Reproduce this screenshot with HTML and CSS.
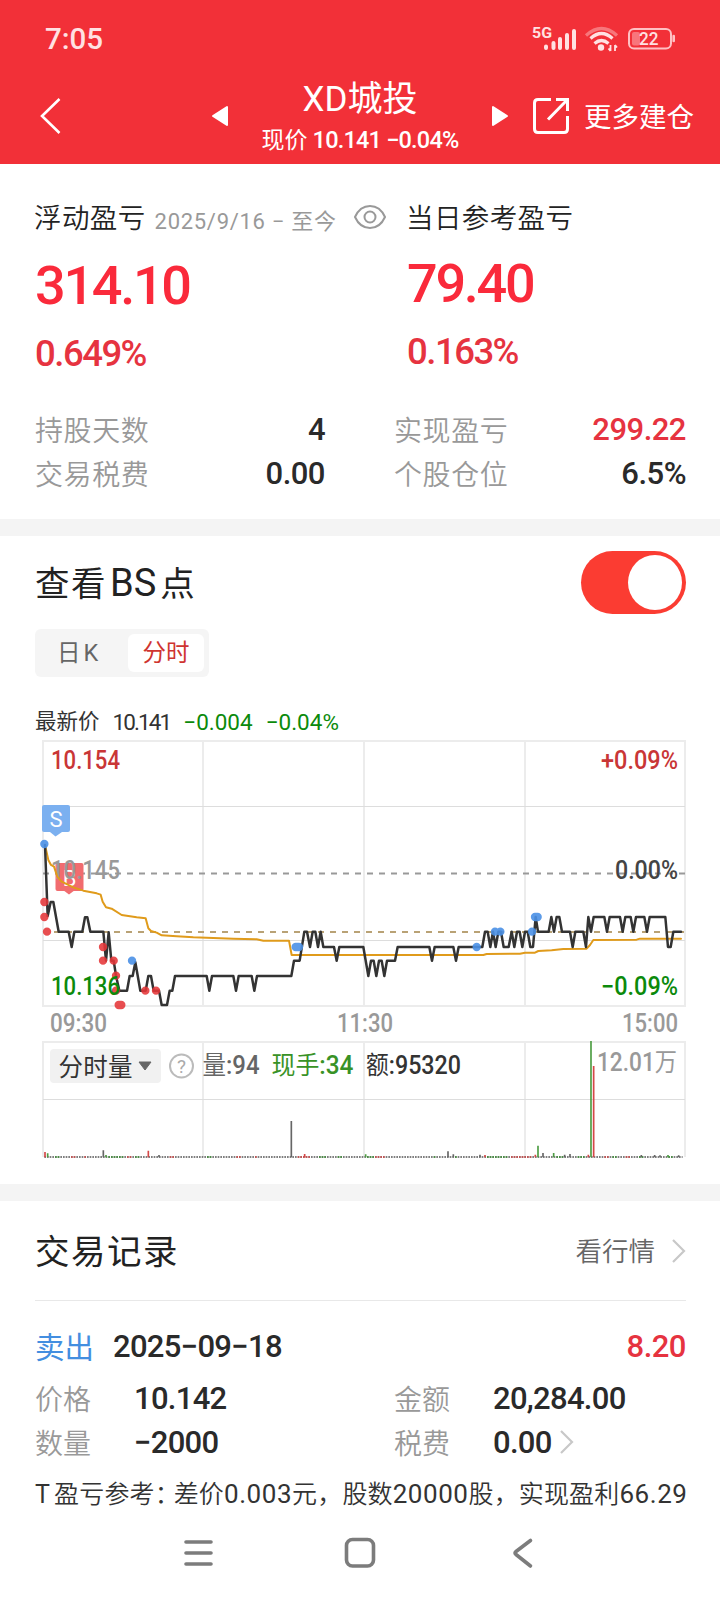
FILE: index.html
```html
<!DOCTYPE html>
<html lang="zh-CN">
<head>
<meta charset="utf-8">
<title>XD城投</title>
<link rel="stylesheet" href="styles.css">
</head>
<body>
<header class="top">
  <div class="status">
    <span class="clock">7:05</span>
    <svg class="status-icons" width="146" height="30" viewBox="530 24 146 30">
      <text x="532" y="37.500" class="net" textLength="20" lengthAdjust="spacingAndGlyphs">5G</text>
      <g stroke="#ffe1e2" stroke-width="4" stroke-linecap="round"><path d="M546 46.500v1.500M553.500 43v5M560 39v9M567 35v13M574 31v17"/></g>
      <g fill="none" stroke="#ffe1e2" stroke-width="3.200">
        <path d="M586 35.500q15.500-14 31 0" opacity=".4"/>
        <path d="M590.500 38.500q11-10 22 0"/>
        <path d="M594.500 43.500q7-6 14 0"/>
      </g>
      <circle cx="601" cy="47.500" r="3.200" fill="#ffe1e2"/>
      <path d="M610.500 45v6m-2-2.500 2 2.500M615 51v-6m2 2.500-2-2.500" stroke="#ffe1e2" stroke-width="1.800" fill="none"/>
      <rect x="629" y="29" width="42" height="19.500" rx="5" fill="none" stroke="#ffc0c3" stroke-width="2"/>
      <rect x="632" y="32" width="8" height="13.500" rx="2" fill="#f8757b"/>
      <path d="M673.700 36v5" stroke="#ffc0c3" stroke-width="2.600" stroke-linecap="round"/>
      <text x="639" y="45" class="batt" textLength="19.500" lengthAdjust="spacingAndGlyphs">22</text>
    </svg>
  </div>
  <div class="titlebar">
    <svg class="back" width="24" height="40" viewBox="0 0 24 40"><path d="M20.500 3 3 20l17.500 17" fill="none" stroke="#fff" stroke-width="2.600"/></svg>
    <svg class="prev" width="18" height="22" viewBox="0 0 18 22"><path d="M16 2v18L2 11z" fill="#fff" stroke="#fff" stroke-width="2" stroke-linejoin="round"/></svg>
    <div class="stock">
      <div class="stock-name">XD城投</div>
      <div class="stock-price"><span class="cn">现价</span> <span class="q">10.141 −0.04%</span></div>
    </div>
    <svg class="next" width="18" height="22" viewBox="0 0 18 22"><path d="M2 2v18l14-9z" fill="#fff" stroke="#fff" stroke-width="2" stroke-linejoin="round"/></svg>
    <svg class="share" width="38" height="38" viewBox="0 0 38 38" fill="none" stroke="#fff" stroke-width="3"><path d="M19 2.500H6Q2.500 2.500 2.500 6v26q0 3.500 3.500 3.500h26q3.500 0 3.500-3.500V19"/><path d="M24 2.500h11.500V14M35.500 2.500 16 22.500"/></svg>
    <span class="more">更多建仓</span>
  </div>
</header>

<section class="summary">
  <div class="pl">
    <div class="pl-col first">
      <div class="pl-head"><span class="label">浮动盈亏</span><span class="range">2025/9/16 − 至今</span>
        <svg class="eye" width="34" height="26" viewBox="0 0 34 26" fill="none" stroke="#999" stroke-width="2"><path d="M2 13Q7 2 17 2t15 11q-5 11-15 11T2 13z"/><circle cx="17" cy="13" r="5.500"/></svg></div>
      <div class="big">314.10</div>
      <div class="pct">0.649%</div>
    </div>
    <div class="pl-col second">
      <div class="pl-head"><span class="label">当日参考盈亏</span></div>
      <div class="big">79.40</div>
      <div class="pct">0.163%</div>
    </div>
  </div>
  <div class="facts">
    <div class="fact"><span class="k">持股天数</span><span class="v">4</span></div>
    <div class="fact"><span class="k">实现盈亏</span><span class="v red">299.22</span></div>
    <div class="fact"><span class="k">交易税费</span><span class="v">0.00</span></div>
    <div class="fact"><span class="k">个股仓位</span><span class="v">6.5%</span></div>
  </div>
</section>

<section class="bs">
  <div class="bs-head"><h2>查看<span class="lat">BS</span>点</h2><div class="toggle"><i></i></div></div>
  <div class="tabs"><span class="tab">日<span class="lat">K</span></span><span class="tab on">分时</span></div>
  <div class="quote"><span class="name">最新价</span><span class="q1">10.141</span><span class="q2">−0.004</span><span class="q3">−0.04%</span></div>
  <svg class="chart" width="720" height="429" viewBox="0 735 720 429">
    <g fill="none" stroke="#ececec" stroke-width="2">
      <path d="M43 741H685V1006H43zM203 741v265M364 741v265M525 741v265"/>
      <path d="M43 1157V1042H685v115M203 1042v115M364 1042v115M525 1042v115"/>
    </g>
    <path d="M43 806.500H685M43 940.500H685M43 1099.500H685" stroke="#ddd" fill="none"/>
    <path d="M43 873.500H685" stroke="#999" stroke-width="2" stroke-dasharray="6 6"/>
    <path d="M54 932H685" stroke="#b9a275" stroke-width="2" stroke-dasharray="6 6"/>
    <g class="din">
      <text x="51" y="769" fill="#c93636" textLength="69" lengthAdjust="spacingAndGlyphs">10.154</text>
      <text x="678" y="769" fill="#c93636" text-anchor="end" textLength="77" lengthAdjust="spacingAndGlyphs">+0.09%</text>
      <text x="678" y="879" fill="#444" text-anchor="end" textLength="63" lengthAdjust="spacingAndGlyphs">0.00%</text>
      <text x="678" y="995" fill="#0b8a0b" text-anchor="end" textLength="77" lengthAdjust="spacingAndGlyphs">−0.09%</text>
      <text x="50" y="1032" fill="#999" textLength="57" lengthAdjust="spacingAndGlyphs">09:30</text>
      <text x="337" y="1032" fill="#999" textLength="56" lengthAdjust="spacingAndGlyphs">11:30</text>
      <text x="622" y="1032" fill="#999" textLength="56" lengthAdjust="spacingAndGlyphs">15:00</text>
    </g>
    <g fill="#7bb0f0"><rect x="42" y="805" width="28" height="27" rx="2"/><path d="M50 832h12l-6.500 4.500z"/></g>
    <g fill="#f16c6f"><rect x="55.500" y="863" width="28" height="28" rx="2"/><path d="M63 890h12l-6 4.500z"/></g>
    <text x="56" y="827" class="mark">S</text>
    <text x="69.500" y="885.500" class="mark">B</text>
    <text x="51" y="879" class="din" fill="#999" textLength="69" lengthAdjust="spacingAndGlyphs">10.145</text>
    <g transform="translate(30 730) scale(.33333)" fill="none" stroke-linejoin="round" stroke-linecap="round">
      <path stroke="#e09b1b" stroke-width="6" d="M45 345L55 390 63 405 72 410 82 440 95 455 130 472 160 482 200 490 212 494 218 515 228 532 245 536 275 555 320 562 347 565 355 595 363 603 380 608 395 616 440 619 490 622 610 626 680 628 700 632 777 632 785 675 1360 675 1370 672 1470 671 1485 668 1515 668 1525 663 1565 661 1600 657 1670 656 1680 645 1690 630 1820 629 1830 626 1953 626"/>
      <path stroke="#333" stroke-width="7.500" d="M45 345L53 558 62 516 70 516 86 605 116 605 125 651 133 605 157 605 165 562 172 562 181 605 220 605 228 692 236 607 244 692 251 692 258 737 268 782 291 782 299 738 308 738 316 697 331 782 347 782 355 738 363 738 371 782 387 782 395 825 411 825 419 782 427 782 435 738 530 738 538 782 546 738 610 738 618 782 626 738 665 738 673 782 681 738 784 738 792 692 809 692 823 605 831 605 840 651 848 605 856 605 864 651 872 605 880 651 912 651 920 692 928 651 1000 651 1015 738 1023 692 1031 692 1039 738 1047 692 1055 692 1063 738 1071 692 1095 692 1103 651 1198 651 1206 692 1214 651 1270 651 1278 692 1286 651 1357 651 1365 605 1373 605 1381 651 1389 605 1397 651 1405 605 1413 605 1421 651 1436 651 1445 605 1453 651 1461 605 1469 605 1477 651 1485 605 1493 605 1501 651 1509 651 1517 561 1524 605 1556 605 1564 561 1572 605 1580 561 1588 561 1596 605 1620 605 1628 651 1636 605 1660 605 1668 651 1675 561 1683 605 1691 561 1723 561 1731 605 1739 561 1770 561 1778 605 1786 561 1802 561 1810 605 1818 561 1843 561 1851 605 1859 561 1906 561 1914 651 1922 651 1930 605 1953 605"/>
      <path stroke="#e53638" stroke-opacity=".88" stroke-width="25" d="M43 516h.1M43 561h.1M51 605h.1M219 651h.1M219 692h.1M251 692h.1M258 737h.1M258 782h.1M266 825h8M346 782h.1M378 782h.1"/>
      <path stroke="#4a90e6" stroke-opacity=".9" stroke-width="25" d="M43 342h.1M306 692h.1M797 651h10M1340 651h.1M1395 605h.1M1411 605h.1M1506 605h.1M1515 561h8"/>
    </g>
    <text x="51" y="995" class="din" fill="#0b8a0b" textLength="69" lengthAdjust="spacingAndGlyphs">10.136</text>
    <rect x="50" y="1049" width="111" height="34" rx="4" fill="#f1f1f1"/>
    <text x="58.500" y="1075.500" class="cnt" fill="#333" textLength="74">分时量</text>
    <path d="M139 1062h12l-6 8z" fill="#666" stroke="#666" stroke-linejoin="round"/>
    <circle cx="181.500" cy="1066" r="11.500" fill="none" stroke="#bbb" stroke-width="2"/>
    <text x="181.500" y="1073" class="help">?</text>
    <text x="202.500" y="1074" class="cnt" fill="#666" textLength="57" lengthAdjust="spacingAndGlyphs">量<tspan class="din">:94</tspan></text>
    <text x="271.500" y="1074" class="cnt" fill="#389226" textLength="82" lengthAdjust="spacingAndGlyphs">现手<tspan class="din">:34</tspan></text>
    <text x="366" y="1074" class="cnt" fill="#333" textLength="95" lengthAdjust="spacingAndGlyphs">额<tspan class="din">:95320</tspan></text>
    <text x="597" y="1070.500" class="cnt" fill="#999" textLength="80" lengthAdjust="spacingAndGlyphs"><tspan class="din">12.01</tspan>万</text>
    <g transform="translate(30 1000) scale(.33333)" fill="none" stroke-width="5">
      <path stroke="#555" stroke-dasharray="5 3" d="M43 471H1958"/>
      <path stroke="#3d9136" stroke-dasharray="5 3" d="M75 471h16M235 471h48M315 471h16M531 471h16M867 471h24M923 471h16M1011 471h24M1211 471h8M1275 471h8M1371 471h64M1579 471h24M1643 471h24M1747 471h16M1827 471h16M1915 471h16"/>
      <path stroke="#d54848" stroke-dasharray="5 3" d="M123 471h16M163 471h8M291 471h16M419 471h16M619 471h16M675 471h8M803 471h40M1035 471h32M1443 471h64M1723 471h16M1787 471h16"/>
      <path stroke="#d54848" d="M45 472V456M355 472V452M824 472V462M1365 472V465M1516 472V464M1675 472V464M1691 472V198"/>
      <path stroke="#4e9d43" d="M53 472V460M228 472V465M1007 472V463M1524 472V437M1571 472V459M1683 472V123M1914 472V465"/>
      <path stroke="#666" d="M220 472V451M387 472V465M784 472V363M1254 472V454M1270 472V463M1350 472V464M1539 472V459M1604 472V464M1620 472V462M1834 472V465M1874 472V465M1890 472V466M1946 472V466"/>
    </g>
  </svg>
</section>

<section class="records">
  <div class="rec-head"><h2>交易记录</h2><span class="link">看行情</span>
    <svg width="16" height="26" viewBox="0 0 16 26"><path d="M3 2l11 11L3 24" fill="none" stroke="#c8c8c8" stroke-width="2.200"/></svg></div>
  <div class="deal"><span class="side">卖出</span><span class="date">2025−09−18</span><span class="gain">8.20</span></div>
  <div class="cells">
    <div><span class="k">价格</span><span class="n">10.142</span></div>
    <div><span class="k">金额</span><span class="n">20,284.00</span></div>
    <div><span class="k">数量</span><span class="n">−2000</span></div>
    <div><span class="k">税费</span><span class="n">0.00</span><svg width="16" height="26" viewBox="0 0 16 26"><path d="M2 2l11 11L2 24" fill="none" stroke="#c8c8c8" stroke-width="2.200"/></svg></div>
  </div>
  <p class="note"><span class="t">T</span>盈亏参考<span class="colon">：</span>差价<span class="d">0.003</span>元，股数<span class="d">20000</span>股，实现盈利<span class="d">66.29</span></p>
</section>

<nav class="sysnav">
  <svg width="720" height="60" viewBox="0 1524 720 60" fill="none" stroke="#7c7c7c" stroke-width="3.600" stroke-linecap="round" stroke-linejoin="round">
    <path d="M186 1542h25M186 1553h25M186 1564h25"/>
    <rect x="346.500" y="1539.500" width="27" height="26.500" rx="6"/>
    <path d="M530.500 1540.500l-14.500 11q-2 1.500 0 3l14.500 11.500"/>
  </svg>
</nav>
</body>
</html>
```

FILE: styles.css
```css
* { box-sizing: border-box; }
body {
  margin: 0;
  width: 720px;
  height: 1600px;
  overflow: hidden;
  background: #fff;
  color: #2a2a2a;
  font-family: Roboto, "Noto Sans CJK SC", sans-serif;
}
svg { display: block; flex: none; }
h2, p { margin: 0; font-weight: 400; }
span, h2, p, .big, .pct { white-space: nowrap; }

.top { height: 164px; background: #f23038; color: #fff; }
.status { height: 78px; padding: 0 44px 0 45px; display: flex; align-items: center; justify-content: space-between; }
.clock { font-size: 29.500px; letter-spacing: 0; color: #ffe1e2; font-weight: 500; }
.net { font: 700 15px Roboto, sans-serif; fill: #ffe1e2; }
.batt { font: 500 18px Roboto, sans-serif; fill: #ffe1e2; }
.titlebar { height: 76px; padding-left: 39px; display: flex; align-items: center; }
.prev { margin-left: 148px; }
.stock { width: 262px; text-align: center; }
.stock-name { font-size: 35px; line-height: 42px; padding-top: 5px; }
.stock-price { font-size: 23.500px; line-height: 34px; margin-top: 2px; font-weight: 500; white-space: nowrap; letter-spacing: -.8px; }
.stock-price .cn { font-size: 23px; letter-spacing: 0; font-weight: 400; }
.share { margin-left: 23px; }
.more { margin: -3px 0 0 14px; font-size: 27.500px; }

.summary { height: 355px; padding: 34px 34px 0 35px; }
.pl { display: grid; grid-template-columns: 372px 1fr; height: 212px; }
.pl-head { display: flex; align-items: center; height: 36px; }
.label { font-size: 27.500px; font-weight: 350; color: #222; margin-left: -1px; letter-spacing: .4px; }
.range { margin: 5px 0 0 9px; font-size: 22px; letter-spacing: .7px; color: #999; font-weight: 400; }
.eye { margin: 1px 20px 0 auto; }
.big { height: 62px; margin-top: 21px; line-height: 62px; font-size: 54px; font-weight: 500; letter-spacing: -2.300px; color: #fa2a3b; }
.pct { height: 50px; margin-top: 12px; line-height: 50px; font-size: 36.500px; font-weight: 500; letter-spacing: -1.500px; color: #e63340; }
.second .big { margin-top: 19px; }
.facts { display: grid; grid-template-columns: 290px 292px; column-gap: 69px; grid-auto-rows: 44px; margin-top: -3px; }
.fact { display: flex; justify-content: space-between; align-items: center; }
.k { font-size: 28px; letter-spacing: .6px; color: #999; font-weight: 350; }
.v { font-size: 31px; font-weight: 500; letter-spacing: -.5px; }
.v.red { color: #e63340; }

.bs { border-top: 17px solid #f4f4f4; height: 665px; }
.bs-head { height: 93px; padding: 0 34px 0 35px; display: flex; align-items: center; justify-content: space-between; }
h2 { font-size: 34.500px; letter-spacing: 1.500px; color: #222; margin-top: -4px; }
.bs-head h2 .lat { margin: 0 4px 0 3px; font-size: 38px; letter-spacing: 0; }
.toggle { width: 105px; height: 63px; border-radius: 32px; background: #fb3c32; padding: 4px; }
.toggle i { display: block; margin-left: auto; width: 54px; height: 55px; border-radius: 50%; background: #fff; }
.tabs { width: 174px; height: 48px; margin-left: 35px; padding: 5px; display: flex; background: #f5f5f5; border-radius: 6px; }
.tab { width: 88px; padding-right: 13px; text-align: center; font-size: 23.500px; line-height: 39px; color: #666; }
.tab .lat { margin-left: 3px; }
.tab.on { width: 76px; padding: 0; background: #fff; border-radius: 6px; color: #cf3430; }
.quote { height: 58px; padding: 31px 0 0 35px; display: flex; align-items: center; font-size: 22.500px; line-height: 28px; color: #333; }
.quote .name { font-size: 21.500px; }
.q1 { margin-left: 13px; letter-spacing: -1.900px; }
.q2, .q3 { margin-left: 13px; color: #0b8a0b; letter-spacing: 0; }
.q3 { margin-left: 13px; }
.din { font-family: Roboto, sans-serif; font-size: 25px; font-weight: 500; }
.cnt { font-family: "Noto Sans CJK SC", sans-serif; font-size: 24.500px; }
.mark { font: 400 22px Roboto, sans-serif; fill: #fff; text-anchor: middle; }
.help { font: 400 19px Roboto, sans-serif; fill: #aaa; text-anchor: middle; }

.records { border-top: 17px solid #f4f4f4; height: 340px; padding: 0 34px 0 35px; }
.rec-head { height: 100px; display: flex; align-items: center; border-bottom: 1px solid #e8e8e8; }
.rec-head .link { margin: -3px 0 0 auto; font-size: 26.500px; font-weight: 350; color: #666; }
.rec-head svg { margin-left: 15px; }
.deal { height: 92px; display: flex; align-items: center; padding-bottom: 2px; }
.side { font-size: 29.500px; color: #438ee0; margin-top: -3px; }
.date { margin-left: 19px; font-size: 31px; font-weight: 500; letter-spacing: -.7px; }
.gain { margin-left: auto; font-size: 31px; font-weight: 500; letter-spacing: -.5px; color: #e63340; }
.cells { display: grid; grid-template-columns: 359px 1fr; grid-auto-rows: 44px; margin-top: -17px; }
.cells > div { display: flex; align-items: center; }
.cells .k { width: 99px; letter-spacing: 0; }
.n { font-size: 31px; font-weight: 500; letter-spacing: -.7px; }
.cells svg { margin-left: 7px; }
.note { margin-top: 12px; height: 36px; line-height: 36px; font-size: 25px; letter-spacing: .15px; color: #333; font-weight: 350; }
.note .t { margin-right: 4px; font-weight: 400; }
.note .colon { letter-spacing: -6px; }
.note .d { font-size: 26px; letter-spacing: .55px; font-weight: 400; }
.sysnav { height: 60px; }
```
